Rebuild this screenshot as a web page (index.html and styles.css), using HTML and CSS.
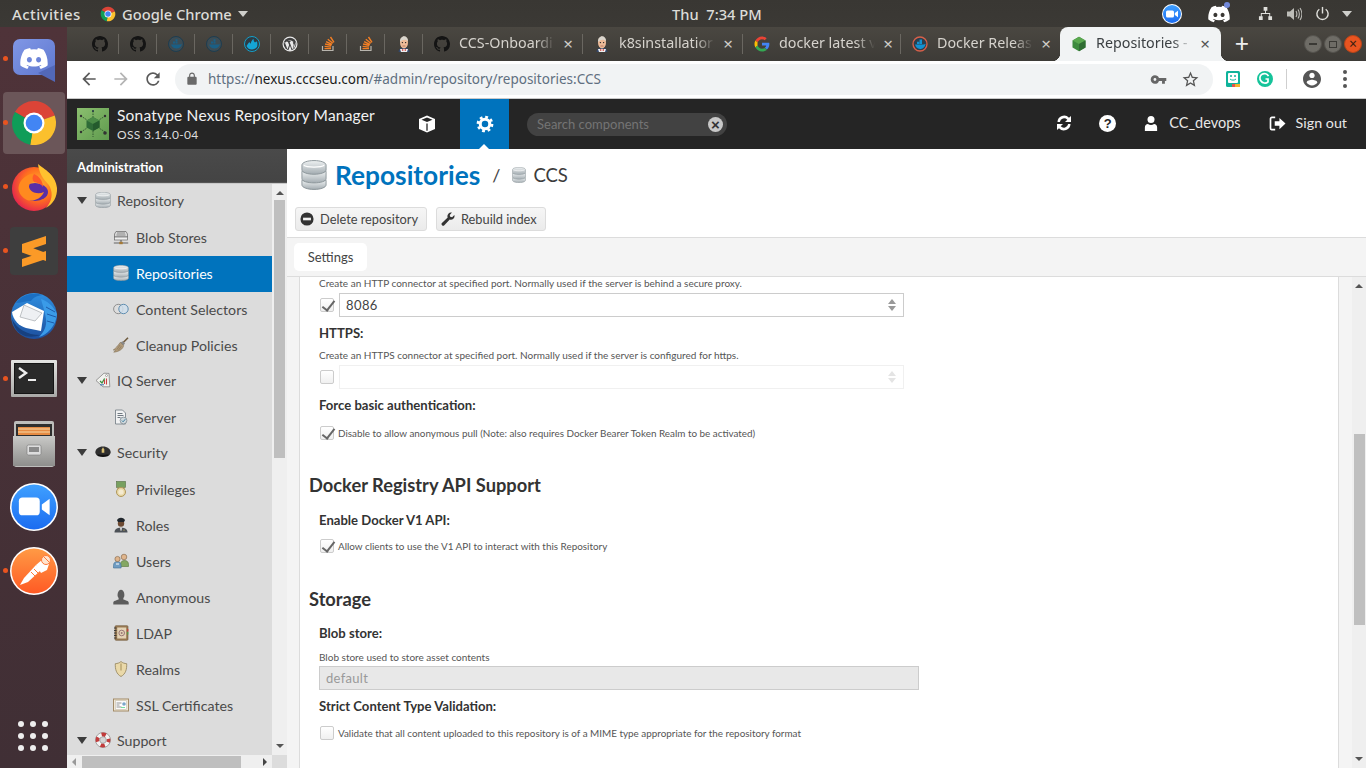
FILE: index.html
```html
<!DOCTYPE html>
<html lang="en">
<head>
<meta charset="utf-8">
<title>Repositories - Nexus Repository Manager</title>
<link rel="stylesheet" href="styles.css">
</head>
<body>
<svg class="sprite" aria-hidden="true">
  <defs>
    <linearGradient id="gDb" x1="0" y1="0" x2="0" y2="1"><stop offset="0" stop-color="#eef1f2"/><stop offset="1" stop-color="#a3acb1"/></linearGradient>
    <linearGradient id="gDiscord" x1="0" y1="0" x2="1" y2="1"><stop offset="0" stop-color="#8097e6"/><stop offset="1" stop-color="#5f78cf"/></linearGradient>
    <linearGradient id="gPost" x1="0" y1="0" x2="0" y2="1"><stop offset="0" stop-color="#ff9a45"/><stop offset="1" stop-color="#ff5a24"/></linearGradient>
    <linearGradient id="gZoom" x1="0" y1="0" x2="0" y2="1"><stop offset="0" stop-color="#3fa0ff"/><stop offset="1" stop-color="#1b6cf0"/></linearGradient>
    <linearGradient id="gSteel" x1="0" y1="0" x2="0" y2="1"><stop offset="0" stop-color="#c9c9c7"/><stop offset="1" stop-color="#8e8e8c"/></linearGradient>
    <linearGradient id="gFrame" x1="0" y1="0" x2="0" y2="1"><stop offset="0" stop-color="#e4e4e2"/><stop offset="1" stop-color="#a9a9a7"/></linearGradient>
    <radialGradient id="gFox" cx=".6" cy=".4" r=".65"><stop offset="0" stop-color="#ffb52f"/><stop offset=".55" stop-color="#ff6f1f"/><stop offset="1" stop-color="#e4234f"/></radialGradient>
    <linearGradient id="gBird" x1="0" y1="0" x2="0" y2="1"><stop offset="0" stop-color="#2f8fe0"/><stop offset="1" stop-color="#1d4f9e"/></linearGradient>
    <linearGradient id="gNx" x1="0" y1="0" x2="1" y2="1"><stop offset="0" stop-color="#8bbf6f"/><stop offset="1" stop-color="#5f9a4e"/></linearGradient>
  </defs>
  <symbol id="github" viewBox="0 0 16 16"><path d="M8 0C3.58 0 0 3.58 0 8c0 3.54 2.29 6.53 5.47 7.59.4.07.55-.17.55-.38 0-.19-.01-.82-.01-1.49-2.01.37-2.53-.49-2.69-.94-.09-.23-.48-.94-.82-1.13-.28-.15-.68-.52-.01-.53.63-.01 1.08.58 1.23.82.72 1.21 1.87.87 2.33.66.07-.52.28-.87.51-1.07-1.78-.2-3.64-.89-3.64-3.95 0-.87.31-1.59.82-2.15-.08-.2-.36-1.02.08-2.12 0 0 .67-.21 2.2.82.64-.18 1.32-.27 2-.27.68 0 1.36.09 2 .27 1.53-1.04 2.2-.82 2.2-.82.44 1.1.16 1.92.08 2.12.51.56.82 1.27.82 2.15 0 3.07-1.87 3.75-3.65 3.95.29.25.54.73.54 1.48 0 1.07-.01 1.93-.01 2.2 0 .21.15.46.55.38A8.013 8.013 0 0016 8c0-4.42-3.58-8-8-8z" fill="#141414"/></symbol>
  <symbol id="dockerDim" viewBox="0 0 16 16"><circle cx="8" cy="8" r="7.5" fill="#3c4c54" stroke="#1e3d50"/><path d="M3 8.5h9.5c.5-.5 1-.7 1.4-.6-.3 2.5-2.4 4.6-5.4 4.6-2.700 0-4.700-1.400-5.500-4z" fill="#1a5f85"/><path d="M5 5.500h2v2H5zM7.500 5.500h2v2h-2zM7.500 3.200h2v2h-2z" fill="#1a5f85"/></symbol>
  <symbol id="dockerBlue" viewBox="0 0 16 16"><circle cx="8" cy="8" r="7.500" fill="#2d3b44" stroke="#159fc9"/><path d="M2.500 10c1-1 1.500-3 3-4 .5 1 .8 1.500 1.200 1.500C7 6 8 4 9.500 2.800c0 2 .5 3 1.500 3.700.7-.8 1.300-1.100 2-1.100.5 2 .5 4 0 5.600-1.200 1.600-3 2.500-5 2.500-2.500 0-4.500-1-5.500-3.500z" fill="#14a5d6"/></symbol>
  <symbol id="wp" viewBox="0 0 16 16"><circle cx="8" cy="8" r="7.500" fill="#e9e9e9"/><circle cx="8" cy="8" r="6.300" fill="#3f3f3f"/><path d="M2.500 5.500l3 8 1.600-4.600-1.100-3h-.9v-.8h3.400v.8h-.9l2.800 7.900 1.200-4c.3-1-.1-2-.6-2.800-.2-.4 0-1 .7-1.100-1-.9-2.300-1.500-3.700-1.500-2.300 0-4.300 1.300-5.500 3.100zM8 9.700l-1.700 4.900c1.100.3 2.300.3 3.400-.1zM13.200 5.300c.1 1-.1 2.100-.5 3.100l-1.700 4.900c2.100-1.400 3.200-5.200 2.200-8z" fill="#e9e9e9"/></symbol>
  <symbol id="so" viewBox="0 0 16 16"><path d="M2.500 10v4.500h10.500V10" fill="none" stroke="#b8b5ae" stroke-width="1.200"/><path d="M4.500 12.600h6.500M4.600 10.400l6.400.7M5.100 8l6.300 1.500M6.100 5.600l5.800 2.900M7.800 3.200l5 4M10.500 1l3.500 5.300" stroke="#f47f24" stroke-width="1.400" fill="none"/></symbol>
  <symbol id="jenkins" viewBox="0 0 16 16"><path d="M2.500 16c0-2.800 2-4.300 5.500-4.300s5.500 1.500 5.500 4.300z" fill="#33476a"/><path d="M4 13h8l-1 3H5z" fill="#eee"/><ellipse cx="8" cy="6.500" rx="4" ry="6" fill="#eebb98"/><path d="M4 6C3.800 2.500 6 .3 8 .3c2.500 0 4.200 2 4 5.200-1.500-2.200-5-2.500-8 .5z" fill="#d9d5cd"/><path d="M6 13l2 1 2-1v2l-2-1-2 1z" fill="#d33833"/><circle cx="6.400" cy="6.600" r=".7" fill="#222"/><circle cx="9.600" cy="6.600" r=".7" fill="#222"/><path d="M6.500 10h3" stroke="#a5604a" stroke-width=".7"/></symbol>
  <symbol id="google" viewBox="0 0 48 48"><path d="M24 9.500c3.900 0 6.600 1.700 8.100 3.100l5.900-5.800C34.400 3.500 29.600 1.400 24 1.400 15.300 1.400 7.800 6.400 4.200 13.700l6.900 5.400C12.800 13.500 17.900 9.500 24 9.500z" fill="#ea4335"/><path d="M46.100 24.500c0-1.800-.1-3.200-.5-4.600H24v8.300h12.700c-.3 2.100-1.600 5.200-4.700 7.300l6.700 5.200c4.300-3.900 7.400-9.800 7.400-16.200z" fill="#4285f4"/><path d="M11.100 28.800c-.5-1.500-.7-3.100-.7-4.800s.3-3.300.7-4.800l-6.900-5.400C2.300 16.900 1.400 20.300 1.400 24s.9 7.100 2.800 10.200z" fill="#fbbc05"/><path d="M24 46.600c6.100 0 11.200-2 14.900-5.500L32 35.800c-1.900 1.300-4.400 2.200-8 2.200-6.100 0-11.200-4-13-9.500l-6.800 5.300C7.800 41.600 15.300 46.600 24 46.600z" fill="#34a853"/></symbol>
  <symbol id="dockerRel" viewBox="0 0 16 16"><circle cx="8" cy="8" r="7" fill="#2c3f4c" stroke="#d8604a" stroke-width="1.300"/><path d="M3 8.500h8.800c.6-.5 1.100-.7 1.700-.6-.3 2.800-2.500 5-5.500 5-2.500 0-4.300-1.600-5-4.400z" fill="#1392d2"/><path d="M7.500 3.500h2.500v4.500H7.500zM5 5.800h2.200V8H5z" fill="#1392d2"/></symbol>
  <symbol id="nxcube" viewBox="0 0 16 16"><path d="M8 .8l6.500 3.600v7.200L8 15.200l-6.500-3.600V4.400z" fill="#3d8a3e"/><path d="M8 .8l6.500 3.600L8 8 1.500 4.400z" fill="#5aa84f"/><path d="M8 8l6.500-3.600v7.200L8 15.200z" fill="#2f6d32"/></symbol>
  <symbol id="db" viewBox="1 0 14 16" preserveAspectRatio="none"><g fill="url(#gDb)" stroke="#8b9499" stroke-width=".5"><path d="M1.500 10.800h13v2.500c0 1.300-2.900 2.400-6.500 2.400s-6.500-1.100-6.500-2.400z"/><path d="M1.500 6h13v4c0 1.300-2.900 2.200-6.500 2.200S1.500 11.300 1.500 10z"/><path d="M1.500 2.700C1.500 1.300 4.400.3 8 .3s6.500 1 6.500 2.400v2.600c0 1.300-2.900 2.300-6.500 2.300S1.500 6.600 1.500 5.300z"/></g><path d="M2.500 2.800c1.500 1.300 9.500 1.300 11 0" fill="none" stroke="#fff" stroke-width=".6"/></symbol>
  <symbol id="blob" viewBox="0 0 16 16"><path d="M3 2.500h10l1.500 2.500v3h-13V5z" fill="#d8d8d8" stroke="#666" stroke-width=".7"/><path d="M4 4h8M3.500 6h9" stroke="#777" stroke-width=".8"/><rect x="1.500" y="8" width="13" height="3" fill="#eee" stroke="#666" stroke-width=".7"/><path d="M8 11v2.500" stroke="#555"/><path d="M.8 14h14.400" stroke="#777" stroke-width="1.200"/><rect x="6.300" y="12.800" width="3.400" height="2.400" fill="#a57a36"/></symbol>
  <symbol id="selector" viewBox="0 0 16 16"><circle cx="5.300" cy="8" r="4.700" fill="#ddd" stroke="#8f8f8f"/><circle cx="10.500" cy="8" r="4.700" fill="#cfe0ee" fill-opacity=".8" stroke="#5f8db0"/></symbol>
  <symbol id="broom" viewBox="0 0 16 16"><path d="M15 .8L9.500 6.200" stroke="#6e5a3e" stroke-width="1.600"/><path d="M9.800 4.300l2.200 2.200-1.700 1.900-2.900-2.900z" fill="#888"/><path d="M7.300 5.300l3.400 3.400c-.8 3-4 6-10 6.500 1-1 1.700-1.700 1.500-2.400-.7.300-1.300.4-2 .2 2.300-1.500 4.500-4 7.100-7.700z" fill="#b09a7a" stroke="#7b6a50" stroke-width=".5"/><path d="M7 8l-3 4.500M8.300 9.200l-2.800 4" stroke="#7b6a50" stroke-width=".5"/></symbol>
  <symbol id="iq" viewBox="0 0 16 16"><path d="M1 8.500L9 1.200l5 .2.800 13.400H8z" fill="#f2f2ef" stroke="#777" stroke-width=".7"/><circle cx="11.500" cy="3.500" r="1" fill="#fff" stroke="#666" stroke-width=".5"/><path d="M5 9l2 2 2.600-4.500" fill="none" stroke="#3b8f3f" stroke-width="1.300"/><path d="M9.500 12V8M11.500 12.500v-6" stroke="#c94343" stroke-width="1.100"/><path d="M5 12.800h4" stroke="#3c6fb0"/></symbol>
  <symbol id="srv" viewBox="0 0 16 16"><path d="M2.500 1h7l3 3v11h-10z" fill="#f1f2f3" stroke="#6f7880" stroke-width=".8"/><path d="M4.500 4.500h5M4.500 6.500h6M4.500 8.500h3" stroke="#6f7880"/><circle cx="10.500" cy="11.500" r="3.400" fill="#cfd8dd" stroke="#77828a" stroke-width=".7"/><path d="M8.800 11.500l1.300 1.300 2.200-2.600" fill="none" stroke="#3e7f9f" stroke-width="1"/></symbol>
  <symbol id="hat" viewBox="0 0 16 16"><path d="M.3 8.500C.3 5 3.800 2.500 8 2.500s7.700 2.500 7.700 6c0 2-3 3-7.700 3S.3 10.500.3 8.500z" fill="#2f2f2f"/><path d="M1 10c2.500 1 11.500 1 14 0-.5 2-3.500 3-7 3S1.500 12 1 10z" fill="#111"/><path d="M8 3.300l1.300 2.200v3.300H6.700V5.500z" fill="#d9c074"/></symbol>
  <symbol id="medal" viewBox="0 0 16 16"><rect x="3.500" y=".5" width="9" height="6" fill="#77a05f" stroke="#566f45" stroke-width=".6"/><path d="M5 6.500v2M11 6.500v2" stroke="#b0975a" stroke-width="1.400"/><circle cx="8" cy="11" r="4.500" fill="#e8d7a4" stroke="#b0975a"/><circle cx="8" cy="11" r="2.600" fill="#f4ead0"/></symbol>
  <symbol id="role" viewBox="0 0 16 16"><path d="M1.500 15.500c0-3 1.800-4.800 6.500-4.800s6.500 1.800 6.500 4.800z" fill="#4c5157"/><circle cx="8" cy="6.500" r="3.200" fill="#6d4a32"/><path d="M4 3.300C4.500 1.500 6 .7 8 .7s3.500.8 4 2.600L11 5H5z" fill="#20262c"/><path d="M7 10.800h2l-.5 3h-1z" fill="#ddd"/><circle cx="11" cy="13" r=".6" fill="#e2c76a"/></symbol>
  <symbol id="users" viewBox="0 0 16 16"><path d="M7.500 11.500c0-2.500 1.500-4 4-4s4 1.500 4 4v2h-8z" fill="#84a763" stroke="#55763c" stroke-width=".6"/><circle cx="11" cy="4" r="2.800" fill="#dfb58d" stroke="#7e5f42" stroke-width=".6"/><path d="M.5 12.500c0-2.500 1.500-4 3.800-4s3.800 1.500 3.800 4v2.500H.5z" fill="#6f9cc2" stroke="#3f6e95" stroke-width=".6"/><circle cx="4.500" cy="6" r="2.600" fill="#dfb58d" stroke="#7e5f42" stroke-width=".6"/><path d="M3 11h3" stroke="#fff"/></symbol>
  <symbol id="anon" viewBox="0 0 16 16"><path d="M.3 15.500v-1.800c0-1.700 3.300-2.300 5.300-3.100.3-1-.1-1.800-.7-2.800C4.200 6.600 4.600.7 8 .7s3.800 5.900 3.100 7.100c-.6 1-1 1.800-.7 2.800 2 .8 5.300 1.400 5.300 3.100v1.800z" fill="#5c5c5c"/></symbol>
  <symbol id="ldap" viewBox="0 0 16 16"><rect x="2" y=".7" width="13" height="14.600" rx="1" fill="#9a7b54" stroke="#6e5536" stroke-width=".6"/><rect x="4.200" y="2.500" width="9" height="11" fill="#e4d3b5"/><path d="M1 3h2.500M1 5.500h2.500M1 8h2.500M1 10.500h2.500M1 13h2.500" stroke="#333" stroke-width=".9"/><circle cx="8.700" cy="8" r="2.800" fill="none" stroke="#977" stroke-width="1"/><circle cx="8.700" cy="8" r="1" fill="#977"/><path d="M14.800 4v2.500" stroke="#d33"/><path d="M14.800 7v2.500" stroke="#4a4"/></symbol>
  <symbol id="shield" viewBox="0 0 16 16"><path d="M8 .5c1.500 1.500 3.500 2 5.700 2.200.2 5.500-1 10.300-5.700 12.800C3.300 13 2.100 8.200 2.300 2.700 4.500 2.500 6.500 2 8 .5z" fill="#ead9a9" stroke="#9a8a62" stroke-width=".9"/><path d="M8 2.500v7" stroke="#a28d58" stroke-width="1"/></symbol>
  <symbol id="cert" viewBox="0 0 16 16"><rect x=".5" y="2" width="15" height="12" fill="#f1e8d6" stroke="#a18a67"/><rect x="2.300" y="3.800" width="11.400" height="8.400" fill="#fff" stroke="#b8b09d" stroke-width=".5"/><path d="M3.500 6h5M3.500 8h3M3.500 10h5" stroke="#777" stroke-width=".8"/><circle cx="11" cy="7" r="1.800" fill="#7ba6c9"/><path d="M8 10.500h4" stroke="#6d9" stroke-width=".9"/></symbol>
  <symbol id="ring" viewBox="0 0 16 16"><circle cx="8" cy="8" r="7.500" fill="#f3f3f3" stroke="#777" stroke-width=".6"/><circle cx="8" cy="8" r="5.500" fill="none" stroke="#c23b3b" stroke-width="3.800" stroke-dasharray="4.300 4.340" stroke-dashoffset="2.100"/><circle cx="8" cy="8" r="3.300" fill="#d5d5d5" stroke="#777" stroke-width=".5"/></symbol>
  <symbol id="gear" viewBox="0 0 20 20"><circle cx="10" cy="10" r="5.300" fill="none" stroke="currentColor" stroke-width="3.400"/><circle cx="10" cy="10" r="7.800" fill="none" stroke="currentColor" stroke-width="3" stroke-dasharray="3.100 3.025"/></symbol>
  <symbol id="discordFace" viewBox="0 0 24 20"><path d="M20.300 2.400A19 19 0 0015.400.8l-.6 1.300a17.800 17.800 0 00-5.600 0L8.600.8a19 19 0 00-4.900 1.600C.6 7.100-.3 11.600.2 16.100c2 1.500 4 2.400 6 3l1.300-2.100c-.7-.3-1.400-.6-2-1l.5-.4c3.900 1.800 8.100 1.800 12 0l.5.4c-.6.4-1.300.7-2 1l1.300 2.100c2-.6 4-1.500 6-3 .5-5.200-.9-9.700-3.500-13.700zM8 13.400c-1.200 0-2.200-1.100-2.200-2.400S6.700 8.600 8 8.600 10.200 9.700 10.200 11 9.200 13.400 8 13.400zm8 0c-1.200 0-2.200-1.100-2.200-2.400s.9-2.400 2.200-2.400 2.200 1.100 2.200 2.400-1 2.400-2.200 2.400z" fill="currentColor"/></symbol>
  <symbol id="chrome" viewBox="0 0 48 48"><path d="M24 24L4.950 13A22 22 0 0144.670 16.480Z" fill="#db4437"/><path d="M24 24L44.670 16.480A22 22 0 0120.180 45.670Z" fill="#fbc02d"/><path d="M24 24L20.180 45.670A22 22 0 014.950 13Z" fill="#0f9d58"/><circle cx="24" cy="24" r="10.500" fill="#fff"/><circle cx="24" cy="24" r="8.300" fill="#4285f4"/></symbol>
</svg>

<header class="topbar">
  <span class="tb-activities">Activities</span>
  <svg class="tb-chrome"><use href="#chrome"/></svg>
  <span class="tb-app">Google Chrome</span>
  <span class="caret-down"></span>
  <span class="tb-clock">Thu&nbsp;&nbsp;7:34 PM</span>
  <svg class="tb-zoom" viewBox="0 0 20 20"><circle cx="10" cy="10" r="10" fill="#fff"/><circle cx="10" cy="10" r="9" fill="url(#gZoom)"/><rect x="4" y="6.500" width="8" height="7" rx="1.500" fill="#fff"/><path d="M12.800 9l3.200-2.300v6.600L12.800 11z" fill="#fff"/></svg>
  <span class="tb-discord">
    <svg class="tb-discord-svg"><use href="#discordFace"/></svg>
    <span class="tb-badge"></span>
  </span>
  <svg class="tb-net" viewBox="0 0 16 16"><path d="M6 1h4v4H6zM1 11h4v4H1zM11 11h4v4h-4zM7.500 5h1v2.500h4.500V11h-1V8.500H4V11H3V7.500h4.500z" fill="#e0e0dc"/></svg>
  <svg class="tb-vol" viewBox="0 0 16 16"><path d="M1 5.500h3L8 2v12l-4-3.500H1z" fill="#bdbdb8"/><path d="M10 5c1 1.700 1 4.300 0 6M12 3.500c1.800 2.500 1.800 6.500 0 9M14 2c2.300 3.500 2.300 8.500 0 12" fill="none" stroke="#bdbdb8" stroke-width="1.100"/></svg>
  <svg class="tb-pow" viewBox="0 0 16 16"><path d="M4.600 3.500a6 6 0 106.800 0" fill="none" stroke="#e0e0dc" stroke-width="1.500"/><path d="M8 1v7" stroke="#e0e0dc" stroke-width="1.500"/></svg>
  <span class="caret-down caret-end"></span>
</header>

<div class="desk">
  <nav class="dock">
    <div class="dock-item running">
      <svg viewBox="0 0 48 48"><rect x="3" y="4" width="42" height="36" rx="7" fill="url(#gDiscord)"/><path d="M28 38l17 9V30z" fill="#5268b8"/><g color="#fff"><use href="#discordFace" x="10" y="12" width="28" height="23"/></g></svg>
    </div>
    <div class="dock-item running selected"><svg viewBox="0 0 48 48"><use href="#chrome"/></svg></div>
    <div class="dock-item running">
      <svg viewBox="0 0 48 48"><circle cx="24" cy="26" r="22" fill="url(#gFox)"/><path d="M28 1c6 5 18 11 19 24 .5 9-4 16-11 20 6-7 7-14 4-21-2-5-10-8-12-23z" fill="#ffc22f"/><ellipse cx="25" cy="29" rx="13" ry="9" fill="#5b2ea6"/><path d="M9 22c3-8 11-12 15-11-2 3-2 6 0 8-3 0-5 2-5 5 1 5 8 8 15 5-3 7-11 10-17 8-6-3-10-9-8-15z" fill="#ff8a1f"/><path d="M24 11c-2 3-2 6 0 8 4 1 7 2 9 5 0-6-4-11-9-13z" fill="#ff5a2a"/></svg>
    </div>
    <div class="dock-item running">
      <svg viewBox="0 0 48 48"><rect width="48" height="48" rx="4" fill="#3e3e3e"/><path d="M12 17l24-8v8l-24 8zM12 17l24 9v8l-24-8.500zM12 32l24-8v8l-24 8z" fill="#fb9a27"/></svg>
    </div>
    <div class="dock-item">
      <svg viewBox="0 0 48 48"><circle cx="24" cy="25" r="23" fill="url(#gBird)"/><path d="M6 12C12 3 24 1 32 4c-6 1-9 3-11 6-5 0-11 2-15 2z" fill="#1b6fc2"/><path d="M31 8c6 2 12 6 16 15-1 12-10 21-18 23 5-5 8-11 7-18-1-8-4-15-5-20z" fill="#3a9be8"/><path d="M36 16l9 5M37 23l9 3M37 30l7 2" stroke="#1d5aa8"/><path d="M2 21l15-9 17 8-3 20-15-3C9 35 3 29 2 21z" fill="#fff"/><path d="M14 14l18 8-7 8-15-4z" fill="#eef0f3" stroke="#a5a9ad" stroke-width=".7"/><path d="M2 28c5 10 15 16 28 16-5 2-13 3-19-1-5-3-8-9-9-15z" fill="#17407f"/></svg>
    </div>
    <div class="dock-item running">
      <svg viewBox="0 0 48 40"><rect x="1" y="1" width="46" height="37" rx="1" fill="url(#gFrame)"/><rect x="4.500" y="4.500" width="39" height="30" fill="#2a2a2a" stroke="#151515"/><path d="M9 9l7 5-7 5" fill="none" stroke="#eee" stroke-width="2.400"/><path d="M18 21h8" stroke="#eee" stroke-width="2"/></svg>
    </div>
    <div class="dock-item">
      <svg viewBox="0 0 44 48"><rect x="2" y="2" width="40" height="46" rx="2" fill="#bdbdbb"/><rect x="4" y="5" width="36" height="12" fill="#2e2e2e"/><rect x="6" y="8" width="32" height="8" fill="#e58a42"/><path d="M6 10h32M6 13h32" stroke="#f6d9a8"/><path d="M1 17h42v30H1z" fill="url(#gSteel)"/><rect x="15" y="26" width="14" height="10" rx="1.500" fill="#ddd" stroke="#777" stroke-width=".6"/><rect x="17" y="28" width="10" height="5" fill="#8a8a8a"/></svg>
    </div>
    <div class="dock-item">
      <svg viewBox="0 0 46 46"><circle cx="23" cy="23" r="23" fill="#fff"/><circle cx="23" cy="23" r="21.500" fill="url(#gZoom)"/><rect x="8.500" y="14" width="20" height="17" rx="3.500" fill="#fff"/><path d="M30.500 20.500l7.500-5.500v16l-7.500-5.500z" fill="#fff"/></svg>
    </div>
    <div class="dock-item running">
      <svg viewBox="0 0 48 48"><circle cx="24" cy="24" r="24" fill="#fff"/><circle cx="24" cy="24" r="22.500" fill="url(#gPost)"/><path d="M10 38l4-7 12-13 5 5-13 12z" fill="#fff"/><path d="M26 18l7-6 6 5-2 6-6 3z" fill="#fff"/><circle cx="36" cy="13" r="4.500" fill="#ffe5d0" stroke="#ff7a3a"/><path d="M34 10l5 5M24 22l4 4M21 25l4 4" stroke="#ff7a3a"/></svg>
    </div>
    <div class="dock-apps">
      <span></span><span></span><span></span><span></span><span></span><span></span><span></span><span></span><span></span>
    </div>
  </nav>

  <div class="browser">
    <div class="tabstrip">
      <div class="mini"><svg><use href="#github"/></svg></div>
      <div class="mini"><svg><use href="#github"/></svg></div>
      <div class="mini"><svg><use href="#dockerDim"/></svg></div>
      <div class="mini"><svg><use href="#dockerDim"/></svg></div>
      <div class="mini"><svg><use href="#dockerBlue"/></svg></div>
      <div class="mini"><svg><use href="#wp"/></svg></div>
      <div class="mini"><svg><use href="#so"/></svg></div>
      <div class="mini"><svg><use href="#so"/></svg></div>
      <div class="mini"><svg><use href="#jenkins"/></svg></div>
      <div class="tab"><svg><use href="#github"/></svg><span class="tab-title">CCS-Onboardi</span><span class="tab-x">×</span></div>
      <div class="tab"><svg><use href="#jenkins"/></svg><span class="tab-title">k8sinstallatior</span><span class="tab-x">×</span></div>
      <div class="tab tab-n"><svg><use href="#google"/></svg><span class="tab-title">docker latest v</span><span class="tab-x">×</span></div>
      <div class="tab tab-last"><svg><use href="#dockerRel"/></svg><span class="tab-title">Docker Releas</span><span class="tab-x">×</span></div>
      <div class="tab tab-active"><svg><use href="#nxcube"/></svg><span class="tab-title">Repositories -</span><span class="tab-x">×</span></div>
      <span class="tab-new">+</span>
      <div class="winbtns">
        <span class="win"><span class="win-min"></span></span>
        <span class="win"><span class="win-max"></span></span>
        <span class="win win-close">×</span>
      </div>
    </div>

    <div class="toolbar">
      <svg class="tool" viewBox="0 0 24 24"><path d="M20 11H7.830l5.590-5.590L12 4l-8 8 8 8 1.410-1.410L7.830 13H20v-2z" fill="#5a5a5a"/></svg>
      <svg class="tool tool-off" viewBox="0 0 24 24"><path d="M12 4l-1.410 1.410L16.170 11H4v2h12.170l-5.580 5.590L12 20l8-8z" fill="#b4b4b4"/></svg>
      <svg class="tool" viewBox="0 0 24 24"><path d="M17.650 6.350A7.958 7.958 0 0012 4c-4.420 0-7.990 3.580-7.990 8s3.570 8 7.990 8c3.730 0 6.840-2.550 7.730-6h-2.080A5.990 5.990 0 0112 18c-3.310 0-6-2.690-6-6s2.690-6 6-6c1.660 0 3.140.690 4.220 1.780L13 11h7V4l-2.350 2.350z" fill="#5a5a5a"/></svg>
      <div class="omnibox">
        <svg class="omni-lock" viewBox="0 0 24 24"><path d="M18 8h-1V6c0-2.760-2.240-5-5-5S7 3.240 7 6v2H6c-1.100 0-2 .9-2 2v10c0 1.100.9 2 2 2h12c1.100 0 2-.9 2-2V10c0-1.100-.9-2-2-2zM9 6c0-1.660 1.340-3 3-3s3 1.340 3 3v2H9V6z" fill="#6a6a6a"/></svg>
        <span class="url"><span class="url-dim">https://</span><span class="url-host">nexus.cccseu.com</span><span class="url-dim">/#admin/repository/repositories:CCS</span></span>
        <svg class="omni-key" viewBox="0 0 24 24"><path d="M12.650 10A5.990 5.990 0 007 6c-3.310 0-6 2.690-6 6s2.690 6 6 6a5.990 5.990 0 005.650-4H17v4h4v-4h2v-4H12.650zM7 14c-1.100 0-2-.9-2-2s.9-2 2-2 2 .9 2 2-.9 2-2 2z" fill="#666"/></svg>
        <svg class="omni-star" viewBox="0 0 24 24"><path d="M22 9.240l-7.190-.62L12 2 9.190 8.630 2 9.240l5.460 4.730L5.820 21 12 17.270 18.180 21l-1.630-7.030L22 9.240zM12 15.400l-3.760 2.270 1-4.280-3.320-2.880 4.380-.38L12 6.100l1.710 4.040 4.380.38-3.320 2.880 1 4.280L12 15.400z" fill="#555"/></svg>
      </div>
      <svg class="ext ext-a" viewBox="0 0 16 16"><rect x="1" y="0" width="14" height="16" rx="1.500" fill="#0fb39b"/><rect x="3" y="2" width="10" height="10" rx="1" fill="#fff"/><circle cx="6" cy="5" r="1" fill="#0fb39b"/><circle cx="10" cy="5" r="1" fill="#0fb39b"/><path d="M5 8c1.500 1.500 4.500 1.500 6 0" fill="none" stroke="#0fb39b"/><path d="M10 13h5v3h-5z" fill="#f5b22d"/><path d="M7 13h3v3H7z" fill="#e4524f"/></svg>
      <svg class="ext ext-b" viewBox="0 0 16 16"><circle cx="8" cy="8" r="8" fill="#15c39a"/><path d="M11.500 5.200A4.500 4.500 0 104 10c1.400 2.300 5 2.800 7 .8V8H8.500" fill="none" stroke="#fff" stroke-width="1.700"/></svg>
      <span class="tool-sep"></span>
      <svg class="ext ext-c" viewBox="2 2 20 20"><path d="M12 2C6.480 2 2 6.480 2 12s4.480 10 10 10 10-4.480 10-10S17.520 2 12 2zm0 3c1.660 0 3 1.340 3 3s-1.340 3-3 3-3-1.340-3-3 1.340-3 3-3zm0 14.200c-2.500 0-4.710-1.280-6-3.220.030-1.990 4-3.080 6-3.080 1.990 0 5.970 1.090 6 3.080-1.290 1.940-3.500 3.220-6 3.220z" fill="#555"/></svg>
      <span class="kebab"><span></span><span></span><span></span></span>
    </div>

    <div class="nx-head">
      <svg class="nx-logo" viewBox="0 0 32 32">
        <rect width="32" height="32" fill="url(#gNx)"/>
        <path d="M16 3v6M16 23v6M4 8l6 4M28 8l-6 4M4 24l6-4M28 24l-6-4" stroke="#355a32" stroke-width="1" stroke-dasharray="1.500 1"/>
        <circle cx="16" cy="3" r="1" fill="#234"/><circle cx="4" cy="8" r="1.200" fill="#333"/><circle cx="28" cy="8" r="1.200" fill="#333"/><circle cx="4" cy="24" r="1.200" fill="#333"/><circle cx="28" cy="25" r="1.800" fill="#333"/>
        <path d="M16 9l6.500 3.500v7L16 23l-6.500-3.500v-7z" fill="#2f6b37"/><path d="M16 9l6.500 3.500L16 16l-6.500-3.500z" fill="#4a8a46"/><path d="M16 16l6.500-3.500v7L16 23z" fill="#245a2d"/>
      </svg>
      <div class="nx-brand">
        <div class="nx-title">Sonatype Nexus Repository Manager</div>
        <div class="nx-ver">OSS 3.14.0-04</div>
      </div>
      <svg class="nx-box" viewBox="0 0 20 20"><path d="M10 1.500l8 3.500v10l-8 3.500L2 15V5z" fill="#fff"/><path d="M10 3.500l5.500 2.300L10 8.100 4.500 5.800z" fill="#252525"/><path d="M10 9.500v7.300" stroke="#252525" stroke-width="1.300"/></svg>
      <div class="nx-admin"><svg><use href="#gear"/></svg><span class="nx-caret"></span></div>
      <div class="nx-search">
        <span class="nx-search-ph">Search components</span>
        <span class="nx-search-x">×</span>
      </div>
      <div class="nx-actions">
        <svg class="nx-act" viewBox="0 0 20 20"><path d="M3.500 9A6.600 6.600 0 0115 4.800L17 3v6h-6l2.300-2.300A4.300 4.300 0 005.900 9zM16.500 11A6.600 6.600 0 015 15.200L3 17v-6h6l-2.300 2.300A4.300 4.300 0 0014.100 11z" fill="#fff"/></svg>
        <span class="nx-help">?</span>
        <svg class="nx-user" viewBox="0 0 16 18"><circle cx="8" cy="4.500" r="4" fill="#fff"/><path d="M1 17.500v-4c0-2.500 1.500-4 3.500-4 2 1.700 5 1.700 7 0 2 0 3.500 1.500 3.500 4v4z" fill="#fff"/></svg>
        <span class="nx-username">CC_devops</span>
        <svg class="nx-out" viewBox="0 0 18 16"><path d="M6 1.500H2.500A1.500 1.500 0 001 3v10a1.500 1.500 0 001.500 1.500H6" fill="none" stroke="#fff" stroke-width="1.800"/><path d="M10.500 2L17 8l-6.500 6v-3.500H5.500v-5h5z" fill="#fff"/></svg>
        <span class="nx-signout">Sign out</span>
      </div>
    </div>

    <div class="nx-main">
      <aside class="side">
        <div class="side-head">Administration</div>
        <div class="side-body">
          <div class="tree-wrap">
            <ul class="tree">
              <li class="node"><span class="twist"></span><svg><use href="#db"/></svg><span>Repository</span></li>
              <li class="leaf"><svg><use href="#blob"/></svg><span>Blob Stores</span></li>
              <li class="leaf current"><svg><use href="#db"/></svg><span>Repositories</span></li>
              <li class="leaf"><svg><use href="#selector"/></svg><span>Content Selectors</span></li>
              <li class="leaf"><svg><use href="#broom"/></svg><span>Cleanup Policies</span></li>
              <li class="node"><span class="twist"></span><svg><use href="#iq"/></svg><span>IQ Server</span></li>
              <li class="leaf"><svg><use href="#srv"/></svg><span>Server</span></li>
              <li class="node"><span class="twist"></span><svg><use href="#hat"/></svg><span>Security</span></li>
              <li class="leaf"><svg><use href="#medal"/></svg><span>Privileges</span></li>
              <li class="leaf"><svg><use href="#role"/></svg><span>Roles</span></li>
              <li class="leaf"><svg><use href="#users"/></svg><span>Users</span></li>
              <li class="leaf"><svg><use href="#anon"/></svg><span>Anonymous</span></li>
              <li class="leaf"><svg><use href="#ldap"/></svg><span>LDAP</span></li>
              <li class="leaf"><svg><use href="#shield"/></svg><span>Realms</span></li>
              <li class="leaf"><svg><use href="#cert"/></svg><span>SSL Certificates</span></li>
              <li class="node"><span class="twist"></span><svg><use href="#ring"/></svg><span>Support</span></li>
            </ul>
            <div class="vbar vbar-side">
              <span class="arr-up"></span>
              <span class="vthumb vthumb-side"></span>
              <span class="arr-down"></span>
            </div>
          </div>
          <div class="hbar">
            <div class="hbar-track">
              <span class="arr-left"></span>
              <span class="hthumb"></span>
              <span class="arr-right"></span>
            </div>
            <span class="hbar-corner"></span>
          </div>
        </div>
      </aside>

      <main class="page">
        <div class="page-head">
          <div class="crumbs">
            <svg class="crumb-big"><use href="#db"/></svg>
            <h1 class="crumb-title">Repositories</h1>
            <span class="crumb-sep">/</span>
            <svg class="crumb-small"><use href="#db"/></svg>
            <span class="crumb-name">CCS</span>
          </div>
          <div class="actions">
            <button class="btn" type="button"><svg viewBox="0 0 16 16"><circle cx="8" cy="8" r="7.500" fill="#333"/><rect x="3.500" y="6.500" width="9" height="3" fill="#f2f2f2"/></svg>Delete repository</button>
            <button class="btn" type="button"><svg viewBox="0 0 16 16"><path d="M15.500 4.500a4.200 4.200 0 01-5.500 4L3.800 15a1.700 1.700 0 01-2.700-2.500l6.500-6.300A4.200 4.200 0 0112.500.7L10 3.300l.5 2.200 2.200.5 2.500-2.500z" fill="#333"/></svg>Rebuild index</button>
          </div>
        </div>
        <div class="tabs"><span class="tabs-item">Settings</span></div>
        <div class="page-body">
          <div class="gutter"></div>
          <form class="panel">
            <p class="hint">Create an HTTP connector at specified port. Normally used if the server is behind a secure proxy.</p>
            <div class="row mt4">
              <span class="check on"></span>
              <div class="spin"><span>8086</span><span class="spin-arrows"><i class="up"></i><i class="dn"></i></span></div>
            </div>
            <label class="lbl mt8">HTTPS:</label>
            <p class="hint mt8">Create an HTTPS connector at specified port. Normally used if the server is configured for https.</p>
            <div class="row mt4">
              <span class="check"></span>
              <div class="spin off"><span></span><span class="spin-arrows"><i class="up"></i><i class="dn"></i></span></div>
            </div>
            <label class="lbl mt8">Force basic authentication:</label>
            <div class="chk mt13"><span class="check on"></span><span>Disable to allow anonymous pull (Note: also requires Docker Bearer Token Realm to be activated)</span></div>
            <h2 class="sec mt33">Docker Registry API Support</h2>
            <label class="lbl mt15">Enable Docker V1 API:</label>
            <div class="chk mt11"><span class="check on"></span><span>Allow clients to use the V1 API to interact with this Repository</span></div>
            <h2 class="sec mt34">Storage</h2>
            <label class="lbl mt14">Blob store:</label>
            <p class="hint mt10">Blob store used to store asset contents</p>
            <div class="ro mt3">default</div>
            <label class="lbl mt8">Strict Content Type Validation:</label>
            <div class="chk mt12"><span class="check"></span><span>Validate that all content uploaded to this repository is of a MIME type appropriate for the repository format</span></div>
          </form>
          <div class="gutter-r"></div>
          <div class="vbar vbar-page">
            <span class="arr-up"></span>
            <span class="vthumb vthumb-page"></span>
            <span class="arr-down"></span>
          </div>
        </div>
      </main>
    </div>
  </div>
</div>
</body>
</html>
```
FILE: styles.css
```css
* { box-sizing: border-box; }
html, body { margin: 0; padding: 0; }
body {
  width: 1366px; height: 768px; overflow: hidden; position: relative;
  font-family: "Lato", "Open Sans", sans-serif; color: #444; background: #fff;
}
.sprite { position: absolute; width: 0; height: 0; }
ul { list-style: none; margin: 0; padding: 0; }
p, h1, h2 { margin: 0; }

/* top bar */
.topbar {
  height: 27px; display: flex; align-items: center;
  background: linear-gradient(#393733, #3b3935);
  color: #dcdcd8; font: 500 14.7px "Noto Sans", sans-serif;
}
.tb-activities { margin-left: 12px; width: 88px; font-size: 15px; letter-spacing: .4px; }
.tb-chrome { width: 16px; height: 16px; }
.tb-app { margin-left: 6px; width: 110px; white-space: nowrap; }
.caret-down { width: 0; height: 0; margin-left: 6px; border: 5px solid transparent; border-top: 6px solid #cfcfcb; border-bottom: 0; }
.tb-clock { margin-left: 424px; width: 90px; white-space: nowrap; }
.tb-zoom { width: 20px; height: 20px; margin-left: 400px; }
.tb-discord { position: relative; margin-left: 26px; width: 22px; height: 18px; color: #fff; }
.tb-discord-svg { width: 22px; height: 18px; display: block; }
.tb-badge { position: absolute; right: 0; top: -3px; width: 6px; height: 6px; border-radius: 50%; background: #7289da; }
.tb-net { width: 15px; height: 15px; margin-left: 28px; }
.tb-vol { width: 16px; height: 16px; margin-left: 13px; }
.tb-pow { width: 15px; height: 15px; margin-left: 13px; }
.caret-end { margin-left: 12px; }

.desk { display: flex; height: 741px; }

/* dock */
.dock {
  width: 67px; height: 741px; display: flex; flex-direction: column; align-items: center;
  background: linear-gradient(#4f3339, #402f35);
}
.dock-item {
  width: 62px; height: 62px; margin: 1px 0 1px 0; flex: none; position: relative;
  display: flex; align-items: center; justify-content: center; border-radius: 4px;
}
.dock-item svg { width: 48px; height: 48px; display: block; }
.dock-item.selected { background: #6b5659; }
.dock-item.running::before {
  content: ""; position: absolute; left: 0; top: 28px; width: 5px; height: 5px;
  border-radius: 50%; background: #e95420;
}
.dock-apps { margin: 118px 1px 0 0; width: 30px; display: grid; grid-template-columns: repeat(3, 6px); gap: 6px; }
.dock-apps span { width: 6px; height: 6px; border-radius: 50%; background: #eee; }

/* browser */
.browser { width: 1299px; display: flex; flex-direction: column; }
.tabstrip {
  height: 34px; display: flex; align-items: stretch;
  background: linear-gradient(#4a4741, #3d3b37); padding-left: 14px;
  font: 400 14.3px "Noto Sans", sans-serif; color: #d6d3cd;
}
.mini { width: 38px; display: flex; align-items: center; justify-content: center; position: relative; }
.mini svg, .tab svg { width: 16px; height: 16px; flex: none; }
.mini::after, .tab::after { content: ""; position: absolute; right: 0; top: 7px; height: 20px; width: 1px; background: #6a6761; }
.tab { width: 160px; display: flex; align-items: center; padding: 0 0 1px 11px; position: relative; }
.tab-n { width: 158px; }
.tab-last { width: 159px; }
.tab-last::after { display: none; }
.tab-title {
  margin-left: 9px; width: 96px; white-space: nowrap; line-height: 18px; margin-bottom: 2px;
  -webkit-mask-image: linear-gradient(90deg, #000 80%, transparent 100%);
          mask-image: linear-gradient(90deg, #000 80%, transparent 100%);
}
.tab-x { margin-left: 7px; width: 12px; text-align: center; font-size: 17px; line-height: 1; color: #cfccc6; }
.tab-active { width: 161px; background: #f1f3f4; border-radius: 8px 8px 0 0; color: #3c4043; }
.tab-active .tab-x { color: #555; }
.tab-active::before, .tab-active::after {
  content: ""; display: block; position: absolute; bottom: 0; top: auto; width: 8px; height: 8px; background: none;
}
.tab-active::before { left: -8px; right: auto; background: radial-gradient(circle at 0 0, transparent 8px, #f1f3f4 8.5px); }
.tab-active::after { right: -8px; background: radial-gradient(circle at 100% 0, transparent 8px, #f1f3f4 8.5px); }
.tab-new { margin-left: 13px; width: 16px; font-size: 25px; font-weight: 400; line-height: 32px; color: #eee; text-align: center; }
.winbtns { margin-left: 54px; display: flex; align-items: center; gap: 2px; }
.win {
  width: 18px; height: 18px; border-radius: 50%; background: #6e6c66; border: 1px solid #55534e;
  display: flex; align-items: center; justify-content: center;
}
.win-min { width: 8px; height: 2px; background: #3a3935; }
.win-max { width: 8px; height: 7px; border: 1px solid #3a3935; }
.win-close { background: #e95420; color: #3a1e10; font-size: 14px; line-height: 1; border-color: #b84418; }

.toolbar {
  height: 38px; display: flex; align-items: center; background: #fff;
  border-bottom: 1px solid #c9c9c9; padding: 0 0 1px 12px;
}
.tool { width: 20px; height: 20px; margin-right: 12px; }
.omnibox {
  width: 1038px; height: 31px; border-radius: 16px; background: #f1f3f4;
  display: flex; align-items: center; padding-left: 9px; margin-right: 12px;
}
.omni-lock { width: 14px; height: 14px; margin-left: 1px; }
.url { margin-left: 9px; font: 400 13.5px "Noto Sans", sans-serif; color: #5f6f80; white-space: nowrap; }
.url-host { color: #1c1c1c; }
.omni-key { width: 17px; height: 17px; margin-left: auto; }
.omni-star { width: 19px; height: 19px; margin: 0 13px 0 14px; }
.ext { width: 16px; height: 16px; flex: none; }
.ext-b { margin-left: 16px; }
.tool-sep { width: 1px; height: 20px; background: #cfcfcf; margin: 0 16px 0 13px; }
.ext-c { width: 18px; height: 18px; }
.kebab { display: flex; flex-direction: column; gap: 3px; margin-left: 22px; }
.kebab span { width: 4px; height: 4px; border-radius: 50%; background: #555; }

/* nexus head */
.nx-head {
  height: 50px; display: flex; align-items: center; background: #252525; padding-left: 10px; color: #eee;
}
.nx-logo { width: 32px; height: 32px; flex: none; }
.nx-brand { margin-left: 8px; width: 300px; }
.nx-title { font-size: 15.5px; line-height: 20px; font-weight: 400; letter-spacing: .2px; color: #f2f2f2; white-space: nowrap; }
.nx-ver { font-size: 12px; line-height: 18px; margin-top: 1px; color: #ddd; letter-spacing: .3px; }
.nx-box { width: 20px; height: 20px; margin-right: 23px; flex: none; }
.nx-admin {
  width: 49px; height: 50px; background: #0073bd; color: #fff; position: relative;
  display: flex; align-items: center; justify-content: center; flex: none;
}
.nx-admin svg { width: 18px; height: 18px; }
.nx-caret { position: absolute; bottom: 0; left: 19px; border: 5px solid transparent; border-bottom-color: #fff; border-top: 0; }
.nx-search {
  margin-left: 18px; width: 200px; height: 23px; border-radius: 12px; background: #424242;
  display: flex; align-items: center; justify-content: space-between; padding: 0 4px 0 10px;
}
.nx-search-ph { font-size: 13px; color: #747474; }
.nx-search-x {
  width: 15px; height: 15px; border-radius: 50%; background: #c8c8c8; color: #333; text-align: center;
  font: 700 15px/15px "Liberation Sans", sans-serif;
}
.nx-actions { display: flex; align-items: center; margin-left: auto; padding: 0 19px 2px 0; }
.nx-act { width: 20px; height: 20px; }
.nx-help {
  width: 17px; height: 17px; border-radius: 50%; background: #fff; color: #252525; margin-left: 25px;
  text-align: center; font: 700 13px/17px "Liberation Sans", sans-serif;
}
.nx-user { width: 14px; height: 17px; margin-left: 28px; }
.nx-username { margin: 0 0 2px 11px; font-size: 14.5px; color: #e8e8e8; }
.nx-out { width: 18px; height: 15px; margin-left: 28px; }
.nx-signout { margin: 0 0 2px 9px; font-size: 14.3px; color: #e8e8e8; }

.nx-main { height: 619px; display: flex; }

/* sidebar */
.side { width: 220px; display: flex; flex-direction: column; flex: none; }
.side-head {
  height: 34px; background: linear-gradient(#4a4a4a, #444); color: #fff; font-size: 13px; font-weight: 700;
  line-height: 36px; padding-left: 10px; border-bottom: 1px solid #555;
}
.side-body { flex: 1; display: flex; flex-direction: column; min-height: 0; background: #dcdcdc; border-top: 1px solid #c8c8c8; }
.tree-wrap { flex: 1; min-height: 0; display: flex; overflow: hidden; }
.tree { width: 205px; flex: none; overflow: hidden; }
.tree li { height: 36px; display: flex; align-items: center; font-size: 14.2px; color: #4a4a4a; white-space: nowrap; }
.tree svg { width: 16px; height: 16px; flex: none; }
.node { padding: 0 0 4px 10px; }
.node svg { margin-left: 8px; margin-right: 6px; }
.twist { width: 0; height: 0; border: 5px solid transparent; border-top: 7px solid #3c3c3c; border-bottom: 0; }
.leaf { padding: 0 0 2px 46px; }
.leaf svg { margin-right: 7px; }
.tree .current { background: #0073bd; color: #fff; }

.vbar { display: flex; flex-direction: column; align-items: center; background: #efefef; flex: none; }
.vbar-side { width: 15px; }
.vthumb { width: 11px; background: #bfbfbf; flex: none; }
.vthumb-side { height: 258px; margin-top: 5px; }
.vthumb-page { height: 191px; margin-top: 146px; }
.arr-up, .arr-down { flex: none; width: 0; height: 0; border: 4px solid transparent; }
.arr-up { border-bottom: 4px solid #555; border-top: 0; margin-top: 7px; }
.arr-down { border-top: 4px solid #555; border-bottom: 0; margin-top: auto; margin-bottom: 7px; }
.hbar { height: 13px; flex: none; display: flex; background: #efefef; }
.hbar-track { width: 205px; display: flex; align-items: center; }
.hbar-corner { width: 15px; background: #dcdcdc; }
.arr-left, .arr-right { width: 0; height: 0; border: 4px solid transparent; flex: none; }
.arr-left { border-right: 4px solid #999; border-left: 0; margin-left: 5px; }
.arr-right { border-left: 4px solid #444; border-right: 0; margin-left: 22px; }
.hthumb { width: 159px; height: 12px; background: #bfbfbf; margin-left: 6px; }

/* page */
.page { width: 1079px; display: flex; flex-direction: column; background: #fff; flex: none; }
.page-head { height: 89px; background: #fff; border-bottom: 1px solid #dcdcdc; padding-left: 8px; }
.crumbs { height: 58px; display: flex; align-items: center; padding: 0 0 6px 6px; }
.crumb-big { width: 26px; height: 30px; }
.crumb-title { margin-left: 8px; font-size: 26.3px; font-weight: 700; color: #0073bd; }
.crumb-sep { margin-left: 12px; font-size: 18px; color: #444; }
.crumb-small { width: 14px; height: 16px; margin-left: 12px; }
.crumb-name { margin-left: 7px; font-size: 18.5px; color: #3c3c3c; }
.actions { display: flex; gap: 9px; }
.btn {
  height: 24px; padding: 0 8px 0 4px; display: flex; align-items: center; gap: 6px;
  background: linear-gradient(#f6f6f6, #ebebeb); border: 1px solid #dcdcdc; border-radius: 3px;
  font: 400 12.8px "Lato", sans-serif; color: #444;
}
.btn svg { width: 14px; height: 14px; }
.tabs { height: 39px; background: #f4f4f4; border-bottom: 1px solid #dcdcdc; padding: 5px 0 0 7px; }
.tabs-item { display: block; width: 73px; height: 28px; background: #fff; border-radius: 5px; text-align: center; font-size: 13px; line-height: 28px; color: #444; }

.page-body { flex: 1; min-height: 0; display: flex; overflow: hidden; }
.gutter { width: 13px; background: #f4f4f4; border-right: 1px solid #dcdcdc; flex: none; }
.gutter-r { width: 14px; background: #f4f4f4; border-left: 1px solid #dcdcdc; flex: none; }
.panel { width: 1038px; flex: none; padding-left: 19px; background: #fff; display: flex; flex-direction: column; }
.vbar-page { width: 14px; }

.hint { font-size: 10px; line-height: 12px; height: 12px; color: #555; white-space: nowrap; }
.lbl { font-size: 13.1px; line-height: 16px; height: 16px; font-weight: 700; color: #333; display: block; }
.sec { margin-left: -10px; font-size: 18.3px; line-height: 24px; height: 24px; font-weight: 700; color: #333; }
.row { display: flex; align-items: center; height: 24px; flex: none; }
.chk { display: flex; align-items: center; height: 14px; font-size: 9.9px; color: #555; gap: 4px; flex: none; white-space: nowrap; }
.check {
  width: 14px; height: 14px; border: 1px solid #ccc; border-radius: 2px; background: linear-gradient(#fff, #f0f0f0);
  position: relative; display: block; flex: none; margin-left: 1px;
}
.check.on::after {
  content: ""; position: absolute; left: 4px; top: -1px; width: 5px; height: 11px;
  border: solid #666; border-width: 0 2px 2px 0; transform: rotate(38deg);
}
.row .check { margin-right: 5px; }
.spin {
  width: 565px; height: 24px; border: 1px solid #ccc; display: flex; align-items: center;
  justify-content: space-between; padding: 0 7px 0 6px; font-size: 13px; color: #444; letter-spacing: .4px;
}
.spin.off { border-color: #f0f0f0; }
.spin-arrows { display: flex; flex-direction: column; gap: 2px; }
.spin-arrows i { display: block; width: 0; height: 0; border: 4px solid transparent; }
.spin-arrows .up { border-bottom: 5px solid #999; border-top: 0; }
.spin-arrows .dn { border-top: 5px solid #999; border-bottom: 0; }
.spin.off .up { border-bottom-color: #e4e4e4; }
.spin.off .dn { border-top-color: #e4e4e4; }
.ro { width: 600px; height: 24px; flex: none; background: #e8e8e8; border: 1px solid #ccc; padding-left: 6px; font-size: 13px; line-height: 23px; color: #999; letter-spacing: .3px; }

.mt3 { margin-top: 3px; } .mt4 { margin-top: 4px; } .mt8 { margin-top: 8px; } .mt10 { margin-top: 10px; }
.mt11 { margin-top: 11px; } .mt12 { margin-top: 12px; } .mt13 { margin-top: 13px; } .mt14 { margin-top: 14px; }
.mt15 { margin-top: 15px; } .mt33 { margin-top: 33px; } .mt34 { margin-top: 34px; }
```
